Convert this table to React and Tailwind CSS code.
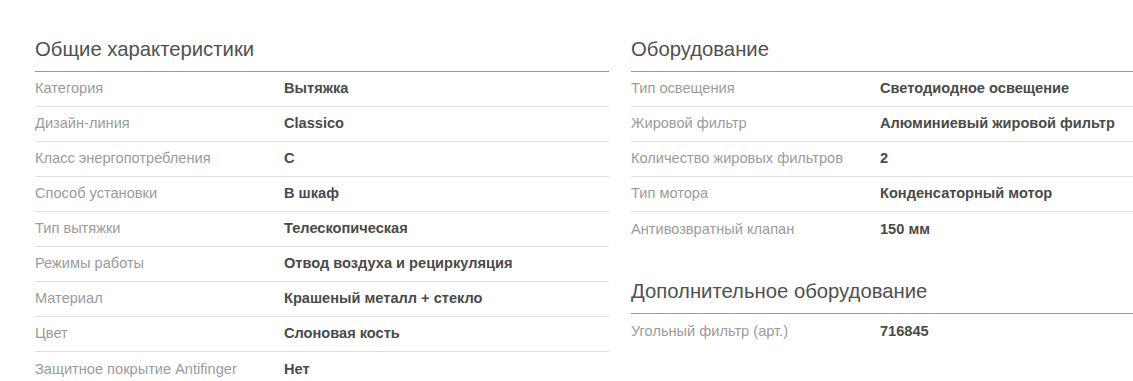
const general = [
  ['Категория', 'Вытяжка'],
  ['Дизайн-линия', 'Classico'],
  ['Класс энергопотребления', 'C'],
  ['Способ установки', 'В шкаф'],
  ['Тип вытяжки', 'Телескопическая'],
  ['Режимы работы', 'Отвод воздуха и рециркуляция'],
  ['Материал', 'Крашеный металл + стекло'],
  ['Цвет', 'Слоновая кость'],
  ['Защитное покрытие Antifinger', 'Нет'],
];

const equipment = [
  ['Тип освещения', 'Светодиодное освещение'],
  ['Жировой фильтр', 'Алюминиевый жировой фильтр'],
  ['Количество жировых фильтров', '2'],
  ['Тип мотора', 'Конденсаторный мотор'],
  ['Антивозвратный клапан', '150 мм'],
];

const extra = [['Угольный фильтр (арт.)', '716845']];

function Section({ title, rows, className = '' }) {
  return (
    <section className={className}>
      <h2 className="text-[20.3px] leading-[22px] text-[#505050] pb-[11px] border-b border-[#9a9a9a]">
        {title}
      </h2>
      <div>
        {rows.map(([label, value], i) => (
          <div
            key={label}
            className={`flex items-center h-[35px] text-[14.6px] ${i < rows.length - 1 ? 'border-b border-[#e0e0e0]' : ''}`}
          >
            <div className="w-[249px] shrink-0 text-[#9b9b9b]">{label}</div>
            <div className="font-bold text-[#4a4a4a]">{value}</div>
          </div>
        ))}
      </div>
    </section>
  );
}

export default function App() {
  return (
    <div
      className="bg-white w-[1133px] h-[381px] overflow-hidden"
      style={{ fontFamily: '"Liberation Sans", Arial, sans-serif' }}
    >
      <div className="flex gap-[22px] pl-[35px] pt-[38px] w-[1300px]">
        <div className="w-[574px] shrink-0">
          <Section title="Общие характеристики" rows={general} />
        </div>
        <div className="w-[574px] shrink-0">
          <Section title="Оборудование" rows={equipment} />
          <Section title="Дополнительное оборудование" rows={extra} className="mt-[33px]" />
        </div>
      </div>
    </div>
  );
}
